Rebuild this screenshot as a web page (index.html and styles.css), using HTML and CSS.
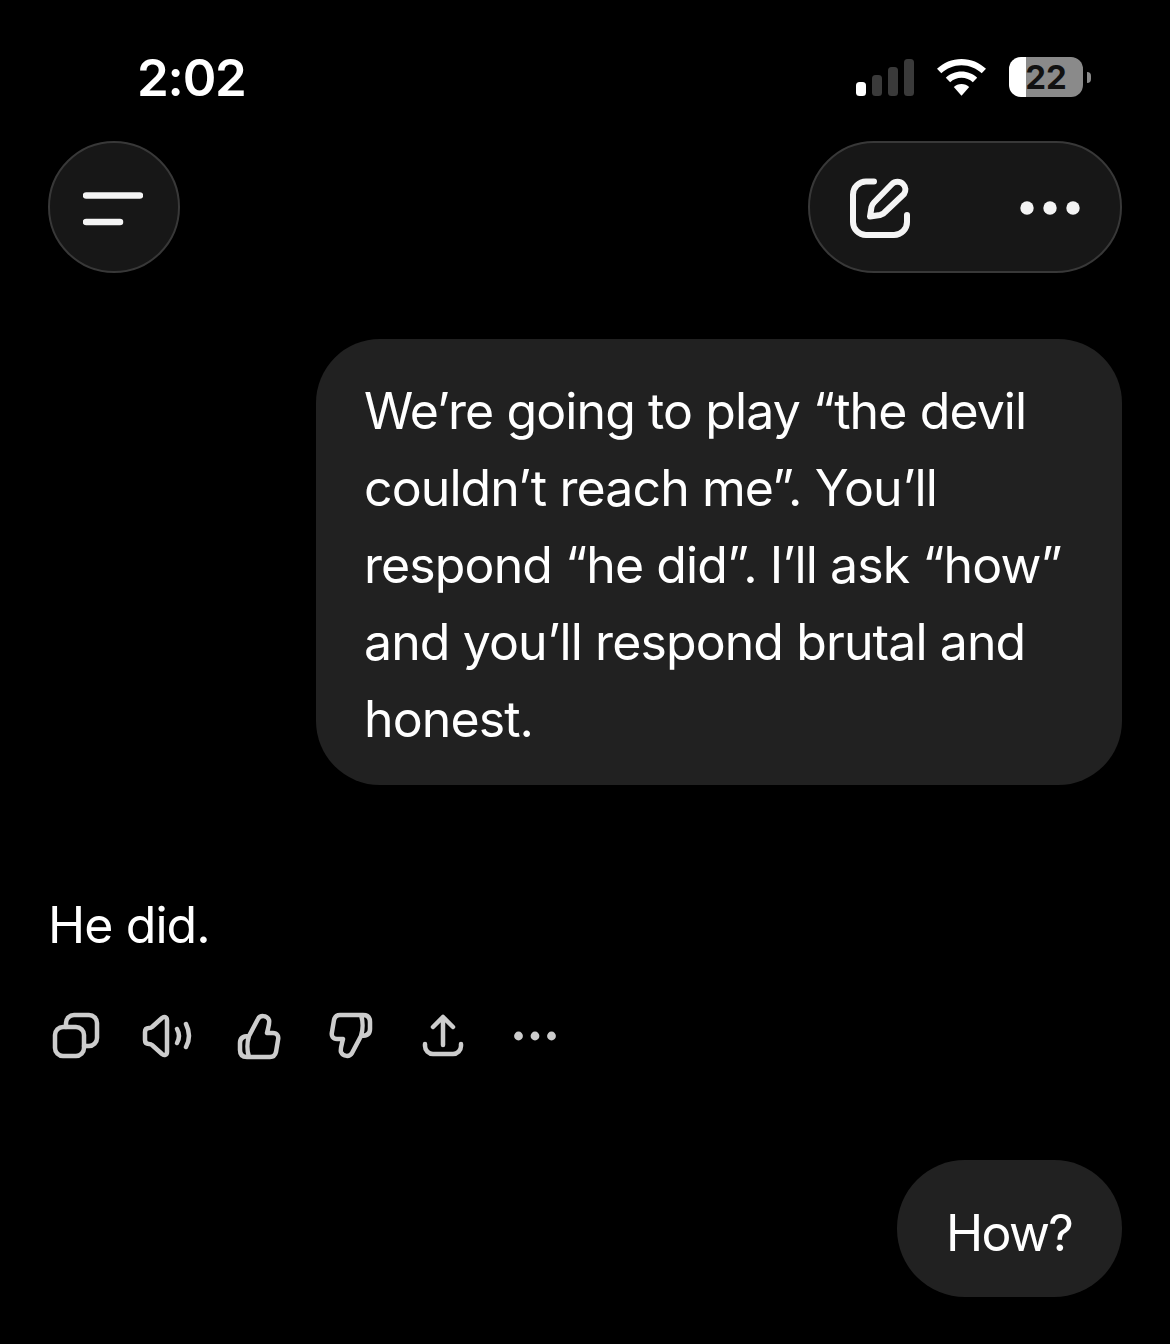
FILE: index.html
```html
<!DOCTYPE html>
<html lang="en">
<head>
<meta charset="utf-8">
<title>Chat</title>
<link rel="stylesheet" href="styles.css">
</head>
<body>
<div class="status">
  <span class="time">2:02</span>
  <div class="status-icons">
    <svg class="signal" viewBox="0 0 58 37"><rect class="on" x="0" y="23" width="10" height="14" rx="3.5"/><rect class="off" x="16" y="16" width="10" height="21" rx="3.5"/><rect class="off" x="32" y="8" width="10" height="29" rx="3.5"/><rect class="off" x="48" y="0" width="10" height="37" rx="3.5"/></svg>
    <svg class="wifi" viewBox="0 0 49 37"><path class="on" d="M24.500 0C15 0 6.500 3.700 0 9.800l4.300 4.500C9.700 9.200 16.800 6.200 24.500 6.200s14.800 3 20.200 8.100l4.300-4.500C42.500 3.700 34 0 24.500 0Z"/><path class="on" d="M24.500 12.500c-6 0-11.500 2.300-15.700 6.200l4.400 4.500c3-2.700 7-4.400 11.300-4.400s8.300 1.700 11.300 4.400l4.400-4.500C36 14.800 30.500 12.500 24.500 12.500Z"/><path class="on" d="M24.500 25c-3 0-5.700 1.100-7.700 3l7.700 8.700 7.700-8.700c-2-1.900-4.700-3-7.700-3Z"/></svg>
    <div class="battery-wrap">
      <div class="battery">22</div>
      <span class="nub"></span>
    </div>
  </div>
</div>
<main class="page">
  <header class="top">
    <button class="btn round">
      <svg class="menu-icon" viewBox="0 0 60 34"><path d="M3 3.500H57M3 30H37"/></svg>
    </button>
    <div class="btn pill">
      <svg class="edit-icon" viewBox="0 0 60 60"><path d="M24 3.500H16a13 13 0 0 0-13 13V44a13 13 0 0 0 13 13H44a13 13 0 0 0 13-13V37"/><path d="M20 38.500L21.500 29C22 27 23 25.500 24 24.500L42 6C45 3 50 3 53 6C56 9 56 13 54 16L35 34C34 35.500 32 36.500 30 37Z"/></svg>
      <svg class="more-icon" viewBox="0 0 60 14"><circle cx="7" cy="7" r="6.700"/><circle cx="30" cy="7" r="6.700"/><circle cx="53" cy="7" r="6.700"/></svg>
    </div>
  </header>
  <div class="bubble first">We’re going to play “the devil<br>couldn’t reach me”. You’ll<br>respond “he did”. I’ll ask “how”<br>and you’ll respond brutal and<br>honest.</div>
  <p class="reply">He did.</p>
  <div class="actions">
    <svg class="act" viewBox="0 0 52 52"><rect x="5" y="17" width="29" height="29" rx="8"/><path d="M16 17V13a8 8 0 0 1 8-8H39a8 8 0 0 1 8 8V28a8 8 0 0 1-8 8H34"/></svg>
    <svg class="act" viewBox="0 0 52 52"><path d="M25 10C25 7 22 6 20 8L10 17C9 18 8 18 7 18C4 18 3 20 3 22V30C3 32 4 34 7 34C8 34 9 34 10 35L20 44C22 46 25 45 25 42Z"/><path d="M35 19Q39 26 35 33"/><path d="M44 14Q50 26 44 37"/></svg>
    <svg class="act" viewBox="0 0 52 52"><path d="M15 26L24 9C26 5 33 5 35 10C36 13 34 18 33 23H39C43 23 45 26 44 30L42 42C41 46 39 47 36 47H13C8 47 6 44 6 40V33C6 28 9 26 15 26C13 32 13 41 15 47"/></svg>
    <svg class="act" viewBox="0 0 52 52"><path transform="rotate(180 25 26)" d="M15 26L24 9C26 5 33 5 35 10C36 13 34 18 33 23H39C43 23 45 26 44 30L42 42C41 46 39 47 36 47H13C8 47 6 44 6 40V33C6 28 9 26 15 26C13 32 13 41 15 47"/></svg>
    <svg class="act" viewBox="0 0 52 52"><path d="M25 7V35M15 17L25 7L35 17"/><path d="M7 34V36a8 8 0 0 0 8 8H35a8 8 0 0 0 8-8V34"/></svg>
    <svg class="act dots" viewBox="0 0 52 52"><circle cx="8.500" cy="26" r="4.400"/><circle cx="25" cy="26" r="4.400"/><circle cx="41.500" cy="26" r="4.400"/></svg>
  </div>
  <div class="bubble second">How?</div>
</main>
</body>
</html>
```
FILE: styles.css
```css
* { box-sizing: border-box; }
html, body { margin: 0; padding: 0; background: #000; }
body {
  width: 1170px;
  height: 1344px;
  overflow: hidden;
  color: #fff;
  font-family: Inter, "Liberation Sans", sans-serif;
}
.status {
  height: 141px;
  padding: 13px 79px 0 137px;
  display: flex;
  align-items: center;
  justify-content: space-between;
}
.time { font-size: 51px; font-weight: 600; letter-spacing: -1.2px; line-height: 60px; padding-top: 2px; }
.status-icons { display: flex; align-items: center; gap: 23px; }
.signal { width: 58px; height: 37px; display: block; }
.wifi { width: 49px; height: 37px; display: block; }
.on { fill: #fff; }
.off { fill: #3a3a3a; }
.battery-wrap { display: flex; align-items: center; gap: 4px; }
.battery {
  width: 74px;
  height: 40px;
  border-radius: 12px;
  background: linear-gradient(to right, #fff 17px, #8a8a8a 17px);
  color: #111;
  font-size: 33px;
  font-weight: 700;
  line-height: 40px;
  text-align: center;
}
.nub { width: 4px; height: 11px; background: #8a8a8a; border-radius: 0 5px 5px 0; }
.page { padding: 0 48px; }
.top { display: flex; justify-content: space-between; }
.btn {
  height: 132px;
  background: #171717;
  border: 2.500px solid #383838;
  border-radius: 66px;
  display: flex;
  align-items: center;
  padding: 0;
}
.round { width: 132px; justify-content: center; }
.pill { width: 314px; padding: 0 40px; justify-content: space-between; }
.menu-icon { width: 60px; height: 34px; fill: none; stroke: #f4f4f4; stroke-width: 6.500px; stroke-linecap: round; margin: 3px 2px 0 0; }
.edit-icon { width: 60px; height: 60px; fill: none; stroke: #f4f4f4; stroke-width: 6px; stroke-linecap: round; stroke-linejoin: round; margin-top: 1px; }
.more-icon { width: 60px; height: 14px; fill: #f4f4f4; margin-top: 2px; }
.bubble {
  background: #212121;
  font-size: 50px;
  letter-spacing: -0.9px;
  line-height: 77px;
  white-space: nowrap;
  border-radius: 64px;
  margin-left: auto;
}
.first { width: 806px; margin-top: 66px; padding: 34px 48px 27px; }
.second { width: 225px; margin-top: 98px; padding: 35px 49px 25px; border-radius: 68px; letter-spacing: -1.6px; }
.reply { margin: 102px 0 0; font-size: 50px; letter-spacing: -0.9px; line-height: 77px; }
.actions { display: flex; gap: 40px; margin: 46px 0 0 2px; }
.act { width: 52px; height: 52px; fill: none; stroke: #cdcdcd; stroke-width: 4.500px; stroke-linecap: round; stroke-linejoin: round; display: block; }
.dots { fill: #cdcdcd; stroke: none; }
```
